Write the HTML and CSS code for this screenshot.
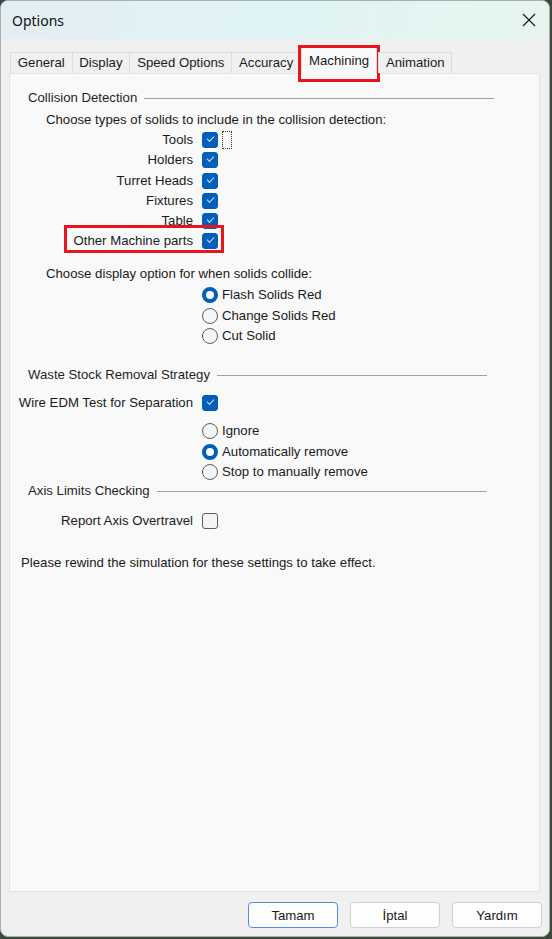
FILE: index.html
```html
<!DOCTYPE html>
<html>
<head>
<meta charset="utf-8">
<link rel="stylesheet" href="styles.css">
</head>
<body>
<div class="window">
  <div class="titlebar">
    <span class="title">Options</span>
    <svg class="close" width="14" height="14" viewBox="0 0 14 14"><path d="M1 1L13 13M13 1L1 13" stroke="#1a1a1a" stroke-width="1.2" fill="none"/></svg>
  </div>
  <div class="tabstrip">
    <div class="tab">General</div>
    <div class="tab">Display</div>
    <div class="tab">Speed Options</div>
    <div class="tab">Accuracy</div>
    <div class="tab active">Machining<span class="mark mark-tab"></span></div>
    <div class="tab">Animation</div>
  </div>
  <div class="panel">
    <div class="group r-collision"><span class="gtitle">Collision Detection</span><span class="gline gline-a"></span></div>
    <div class="row r-choose1 indent45">Choose types of solids to include in the collision detection:</div>
    <div class="crow r-first"><span class="lbl">Tools</span><span class="cb checked"></span><span class="focus"></span></div>
    <div class="crow"><span class="lbl">Holders</span><span class="cb checked"></span></div>
    <div class="crow"><span class="lbl">Turret Heads</span><span class="cb checked"></span></div>
    <div class="crow"><span class="lbl">Fixtures</span><span class="cb checked"></span></div>
    <div class="crow"><span class="lbl">Table</span><span class="cb checked"></span></div>
    <div class="crow other"><span class="lbl">Other Machine parts</span><span class="cb checked"></span><span class="mark mark-other"></span></div>
    <div class="row r-choose2 indent45">Choose display option for when solids collide:</div>
    <div class="rrow r-flash"><span class="rb on"></span><span>Flash Solids Red</span></div>
    <div class="rrow"><span class="rb"></span><span>Change Solids Red</span></div>
    <div class="rrow"><span class="rb"></span><span>Cut Solid</span></div>
    <div class="group r-waste"><span class="gtitle">Waste Stock Removal Strategy</span><span class="gline gline-b"></span></div>
    <div class="crow r-wire"><span class="lbl">Wire EDM Test for Separation</span><span class="cb checked"></span></div>
    <div class="rrow r-ignore"><span class="rb"></span><span>Ignore</span></div>
    <div class="rrow"><span class="rb on"></span><span>Automatically remove</span></div>
    <div class="rrow"><span class="rb"></span><span>Stop to manually remove</span></div>
    <div class="group r-axis"><span class="gtitle">Axis Limits Checking</span><span class="gline gline-b"></span></div>
    <div class="crow r-report"><span class="lbl">Report Axis Overtravel</span><span class="cb"></span></div>
    <div class="row r-please indent20">Please rewind the simulation for these settings to take effect.</div>
  </div>
  <div class="footer">
    <button class="btn default">Tamam</button>
    <button class="btn">İptal</button>
    <button class="btn">Yardım</button>
  </div>
</div>
</body>
</html>
```
FILE: styles.css
```css
html, body {
  margin: 0;
  padding: 0;
}
body {
  width: 552px;
  height: 939px;
  background: #3b4a3b;
  font-family: "Liberation Sans", Arial, sans-serif;
  font-size: 13.2px;
  color: #1a1a1a;
  overflow: hidden;
}
.window {
  width: 550px;
  height: 937px;
  box-sizing: border-box;
  background: #f0f0f0;
  border: 1px solid #a9b0b4;
  border-radius: 8px;
  display: flex;
  flex-direction: column;
  overflow: hidden;
}
.titlebar {
  height: 38px;
  flex: none;
  display: flex;
  align-items: center;
  justify-content: space-between;
  padding: 0 13px 0 11px;
  background: linear-gradient(90deg, #e3eef2 0%, #e0f4f6 50%, #e6f6ee 100%);
}
.title {
  font-family: "Noto Sans", "Liberation Sans", sans-serif;
  font-size: 14px;
  color: #111;
}
.close {
  display: block;
}
.tabstrip {
  height: 34px;
  flex: none;
  display: flex;
  align-items: flex-end;
  padding-left: 9px;
  position: relative;
  z-index: 2;
}
.tab {
  height: 21px;
  box-sizing: border-box;
  padding: 0 6.8px 1px;
  display: flex;
  align-items: center;
  border: 1px solid #dcdcdc;
  border-bottom: none;
  margin-right: -1px;
  background: #f0f0f0;
  font-size: 13.2px;
  position: relative;
}
.tab.active {
  height: 27px;
  background: #f9f9f9;
  margin-left: 1px;
  margin-right: 1px;
  margin-bottom: -1px;
  padding: 0 7px 2px;
  align-items: center;
}
.mark {
  position: absolute;
  border: 3px solid #e8151e;
  pointer-events: none;
}
.mark-tab {
  left: -4px;
  right: -4px;
  top: -3px;
  bottom: -8px;
}
.panel {
  flex: none;
  height: 819px;
  margin: 0 9px 0 8px;
  box-sizing: border-box;
  background: #f9f9f9;
  border: 1px solid #e3e3e3;
  display: flex;
  flex-direction: column;
  padding-top: 14px;
  position: relative;
}
.row, .group, .crow, .rrow {
  height: 20px;
  line-height: 20px;
  flex: none;
  white-space: nowrap;
}
.indent45 { padding-left: 36px; }
.indent20 { padding-left: 11px; }
.group {
  display: flex;
  align-items: center;
  padding-left: 18px;
}
.gtitle {
  color: #1f1f1f;
}
.gline {
  height: 1px;
  background: #a0a0a0;
  margin-left: 7px;
}
.gline-a { width: 350px; }
.gline-b { flex: 1; margin-right: 52px; }
.r-choose1 { margin-top: 2px; }
.crow {
  display: grid;
  grid-template-columns: 183px 16px auto;
  column-gap: 9px;
  align-items: center;
  position: relative;
}
.crow + .crow { margin-top: 0.3px; }
.lbl {
  text-align: right;
}
.cb {
  width: 16px;
  height: 16px;
  box-sizing: border-box;
  border-radius: 3px;
  border: 1px solid #5d5d5d;
  background: #f5f5f5;
  position: relative;
}
.cb.checked {
  background: #005fb8;
  border-color: #005fb8;
}
.cb.checked::after {
  content: "";
  position: absolute;
  left: 4px;
  top: 3px;
  width: 6px;
  height: 3px;
  border-left: 1.3px solid #cfe3f6;
  border-bottom: 1.3px solid #cfe3f6;
  transform: rotate(-45deg);
}
.focus {
  width: 10px;
  height: 18px;
  box-sizing: border-box;
  border: 1px dotted #333;
  margin-left: -5px;
}
.mark-other {
  left: 54px;
  width: 160px;
  top: -6px;
  height: 28px;
  box-sizing: border-box;
}
.r-choose2 { margin-top: 13px; }
.rrow {
  display: flex;
  align-items: center;
  padding-left: 192px;
  gap: 4px;
}
.r-flash { margin-top: 1px; }
.rrow + .rrow { margin-top: 0.5px; }
.rb {
  width: 16px;
  height: 16px;
  box-sizing: border-box;
  border-radius: 50%;
  border: 1px solid #5d5d5d;
  background: #f5f5f5;
  flex: none;
}
.rb.on {
  border: 4.5px solid #005fb8;
  background: #ffffff;
}
.r-waste { margin-top: 19px; }
.r-wire { margin-top: 8px; }
.r-ignore { margin-top: 8px; }
.r-axis { margin-top: -1px; }
.r-report { margin-top: 10px; }
.r-please { margin-top: 22px; }
.footer {
  flex: 1;
  display: flex;
  justify-content: flex-end;
  align-items: flex-start;
  gap: 12px;
  padding: 10px 7px 0 0;
}
.btn {
  width: 90px;
  height: 26px;
  box-sizing: border-box;
  border: 1px solid #d0d0d0;
  border-radius: 4px;
  background: #fdfdfd;
  font-family: "Liberation Sans", Arial, sans-serif;
  font-size: 13.2px;
  color: #1a1a1a;
  padding: 0;
}
.btn.default {
  border: 1.5px solid #4d8fd1;
}
```
